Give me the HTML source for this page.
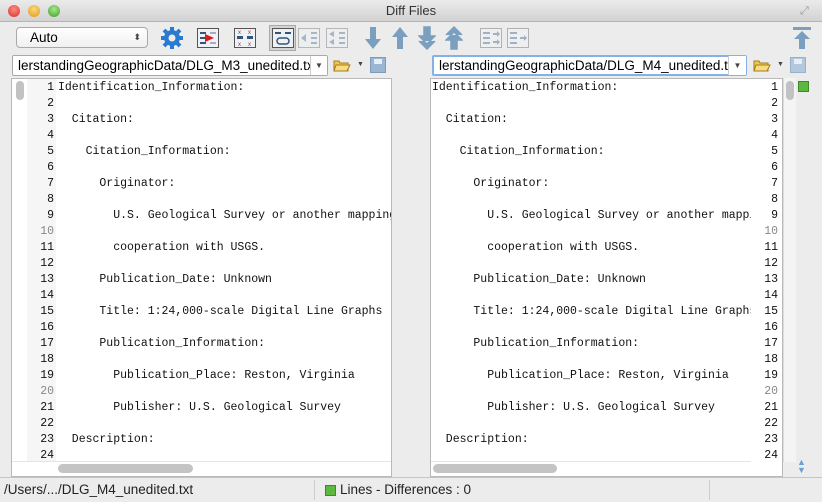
<!DOCTYPE html>
<html><head><meta charset="utf-8"><style>
*{margin:0;padding:0;box-sizing:border-box}
body{width:822px;height:502px;overflow:hidden;background:#ececec;font-family:"Liberation Sans",sans-serif;position:relative}
.abs{position:absolute}
.title{left:0;top:0;width:822px;height:22px;background:linear-gradient(#ebebeb,#d2d2d2);border-bottom:1px solid #b5b5b5;text-align:center;font-size:13px;line-height:22px;color:#333}
.dot{width:12px;height:12px;border-radius:6px;top:5px}
.combo{background:#fff;border:1px solid #a9a9a9;border-radius:3px;font-size:13.5px;line-height:19px}
.panel{background:#fff;border:1px solid #b9b9b9}
.code{font-family:"Liberation Mono",monospace;font-size:11.5px;line-height:16px;color:#111;white-space:pre}
.num{font-family:"Liberation Mono",monospace;font-size:11.5px;line-height:16px;color:#111;text-align:right;white-space:pre}
</style></head><body>
<div class="abs title">Diff Files</div>
<div class="abs dot" style="left:8px;background:radial-gradient(circle at 50% 35%,#ff8c80,#d8302a)"></div>
<div class="abs dot" style="left:28px;background:radial-gradient(circle at 50% 35%,#ffd77a,#dc9a16)"></div>
<div class="abs dot" style="left:48px;background:radial-gradient(circle at 50% 35%,#a6e88a,#3e9e2a)"></div>
<div class="abs" style="left:800px;top:5px;font-size:11px;color:#999">⤢</div>

<div class="abs combo" style="left:16px;top:27px;width:132px;height:21px;padding-left:13px;border-radius:4px;background:linear-gradient(#fff,#f0f0f0)">Auto<span class="abs" style="right:6px;top:0;font-size:9px;color:#444">⬍</span></div>

<svg class="abs" style="left:160px;top:26px" width="24" height="24" viewBox="0 0 24 24"><g fill="#2a7ad0"><circle cx="12" cy="12" r="8"/><g stroke="#2a7ad0" stroke-width="4"><line x1="12" y1="1" x2="12" y2="23"/><line x1="1" y1="12" x2="23" y2="12"/><line x1="4" y1="4" x2="20" y2="20"/><line x1="20" y1="4" x2="4" y2="20"/></g></g><circle cx="12" cy="12" r="3.5" fill="#ececec"/></svg>
<svg class="abs" style="left:197px;top:28px" width="22" height="20"><rect x="0.5" y="0.5" width="21" height="19" fill="#eef2f6" stroke="#555"/><rect x="3" y="4" width="6" height="2" fill="#357"/><rect x="3" y="9" width="6" height="2" fill="#357"/><rect x="3" y="14" width="6" height="2" fill="#357"/><rect x="13" y="4" width="6" height="2" fill="#aab"/><rect x="13" y="14" width="6" height="2" fill="#aab"/><path d="M8 6 L17 10 L8 14Z" fill="#e01818"/></svg>
<svg class="abs" style="left:234px;top:28px" width="22" height="20"><rect x="0.5" y="0.5" width="21" height="19" fill="#eef2f6" stroke="#555"/><rect x="3" y="8" width="6" height="3" fill="#357"/><rect x="13" y="8" width="6" height="3" fill="#357"/><text x="4" y="6" font-size="6" fill="#c22">x</text><text x="14" y="6" font-size="6" fill="#c22">x</text><text x="4" y="18" font-size="6" fill="#c22">x</text><text x="14" y="18" font-size="6" fill="#c22">x</text></svg>
<div class="abs" style="left:269px;top:25px;width:27px;height:26px;background:#d4d4d4;border:1px solid #aaa"></div>
<svg class="abs" style="left:272px;top:28px" width="22" height="20"><rect x="0.5" y="0.5" width="21" height="19" fill="#eef2f6" stroke="#555"/><rect x="3" y="4" width="6" height="2" fill="#357"/><rect x="13" y="4" width="6" height="2" fill="#357"/><rect x="5" y="10" width="12" height="6" rx="3" fill="none" stroke="#357" stroke-width="1.5"/></svg>
<svg class="abs" style="left:298px;top:28px" width="22" height="20" opacity=".45"><rect x="0.5" y="0.5" width="21" height="19" fill="#eef2f6" stroke="#777"/><rect x="13" y="4" width="6" height="2" fill="#579"/><rect x="13" y="9" width="6" height="2" fill="#579"/><rect x="13" y="14" width="6" height="2" fill="#579"/><path d="M3 10 L8 6 V14Z" fill="#579"/></svg>
<svg class="abs" style="left:326px;top:28px" width="22" height="20" opacity=".45"><rect x="0.5" y="0.5" width="21" height="19" fill="#eef2f6" stroke="#777"/><rect x="13" y="4" width="6" height="2" fill="#579"/><rect x="13" y="9" width="6" height="2" fill="#579"/><rect x="13" y="14" width="6" height="2" fill="#579"/><path d="M3 6 L8 3 V9Z M3 14 L8 11 V17Z" fill="#579"/></svg>
<svg class="abs" style="left:364px;top:26px" width="18" height="24"><path d="M6 1h6v12h5l-8 10-8-10h5z" fill="#7a9fbf"/></svg>
<svg class="abs" style="left:391px;top:26px" width="18" height="24"><path d="M6 23h6v-12h5l-8-10-8 10h5z" fill="#7a9fbf"/></svg>
<svg class="abs" style="left:418px;top:26px" width="18" height="24"><path d="M6 1h6v9h5l-8 8-8-8h5z M1 15l8 8 8-8" fill="#7a9fbf" stroke="#7a9fbf" stroke-width="1.5"/></svg>
<svg class="abs" style="left:445px;top:26px" width="18" height="24"><path d="M6 23h6v-9h5l-8-8-8 8h5z M1 9l8-8 8 8" fill="#7a9fbf" stroke="#7a9fbf" stroke-width="1.5"/></svg>
<svg class="abs" style="left:480px;top:28px" width="22" height="20" opacity=".5"><rect x="0.5" y="0.5" width="21" height="19" fill="#eef2f6" stroke="#777"/><rect x="3" y="4" width="7" height="2" fill="#579"/><rect x="3" y="9" width="7" height="2" fill="#579"/><rect x="3" y="14" width="7" height="2" fill="#579"/><path d="M13 5h4v-2l3 3-3 3v-2h-4z M13 13h4v-2l3 3-3 3v-2h-4z" fill="#579"/></svg>
<svg class="abs" style="left:507px;top:28px" width="22" height="20" opacity=".5"><rect x="0.5" y="0.5" width="21" height="19" fill="#eef2f6" stroke="#777"/><rect x="3" y="4" width="7" height="2" fill="#579"/><rect x="3" y="9" width="7" height="2" fill="#579"/><rect x="3" y="14" width="7" height="2" fill="#579"/><path d="M13 9h4v-2l3 3-3 3v-2h-4z" fill="#579"/></svg>
<svg class="abs" style="left:793px;top:26px" width="18" height="24"><rect x="0" y="1" width="18" height="3" fill="#7a9fbf"/><path d="M6 23h6v-10h5l-8-8-8 8h5z" fill="#7a9fbf"/></svg>

<div class="abs combo" style="left:12px;top:55px;width:316px;height:21px;padding-left:5px;border-radius:2px;overflow:hidden">lerstandingGeographicData/DLG_M3_unedited.txt</div>
<div class="abs" style="left:310px;top:56px;width:17px;height:19px;border-left:1px solid #ccc;background:#fff;font-size:8px;text-align:center;line-height:19px;color:#444">▼</div>
<svg class="abs" style="left:333px;top:58px" width="18" height="14"><path d="M1 3h5l1 2h8v8H1z" fill="#f0c850" stroke="#a67c1a"/><path d="M3 7h14l-3 6H1z" fill="#f7dc82" stroke="#a67c1a"/></svg>
<div class="abs" style="left:357px;top:61px;font-size:7px;color:#444">▼</div>
<div class="abs" style="left:370px;top:57px;width:16px;height:16px;background:#9ab6d3;border:1px solid #7d9cbd"><div style="margin:1px 3px;height:5px;background:#e6eef6"></div></div>

<div class="abs combo" style="left:432px;top:55px;width:315px;height:21px;padding-left:5px;border:2px solid #86b0e8;border-radius:2px;overflow:hidden;line-height:17px">lerstandingGeographicData/DLG_M4_unedited.txt|</div>
<div class="abs" style="left:728px;top:56px;width:18px;height:19px;border-left:1px solid #ccc;background:#fff;font-size:8px;text-align:center;line-height:19px;color:#444">▼</div>
<svg class="abs" style="left:753px;top:58px" width="18" height="14"><path d="M1 3h5l1 2h8v8H1z" fill="#f0c850" stroke="#a67c1a"/><path d="M3 7h14l-3 6H1z" fill="#f7dc82" stroke="#a67c1a"/></svg>
<div class="abs" style="left:777px;top:61px;font-size:7px;color:#444">▼</div>
<div class="abs" style="left:790px;top:57px;width:16px;height:16px;background:#b4c8dc;border:1px solid #9ab0c8"><div style="margin:1px 3px;height:5px;background:#e6eef6"></div></div>

<!-- left panel -->
<div class="abs panel" style="left:11px;top:78px;width:381px;height:399px"></div>
<div class="abs" style="left:27px;top:79px;width:29px;height:382px;background:#f6f6f6"></div>
<div class="abs" style="left:16px;top:81px;width:8px;height:19px;border-radius:4px;background:#c2c2c2"></div>
<div class="abs num" style="left:27px;top:80px;width:27px">1
2
3
4
5
6
7
8
9
<span style="color:#888">10</span>
11
12
13
14
15
16
17
18
19
<span style="color:#888">20</span>
21
22
23
24</div>
<div class="abs code" style="left:58px;top:80px;width:333px;overflow:hidden;height:382px">Identification_Information:

  Citation:

    Citation_Information:

      Originator:

        U.S. Geological Survey or another mapping

        cooperation with USGS.

      Publication_Date: Unknown

      Title: 1:24,000-scale Digital Line Graphs

      Publication_Information:

        Publication_Place: Reston, Virginia

        Publisher: U.S. Geological Survey

  Description:
</div>
<div class="abs" style="left:12px;top:461px;width:379px;height:15px;background:#fff;border-top:1px solid #e4e4e4"></div>
<div class="abs" style="left:58px;top:464px;width:135px;height:9px;border-radius:5px;background:#c4c4c4"></div>

<!-- right panel -->
<div class="abs panel" style="left:430px;top:78px;width:353px;height:399px"></div>
<div class="abs code" style="left:432px;top:80px;width:319px;overflow:hidden;height:382px">Identification_Information:

  Citation:

    Citation_Information:

      Originator:

        U.S. Geological Survey or another mapping

        cooperation with USGS.

      Publication_Date: Unknown

      Title: 1:24,000-scale Digital Line Graphs

      Publication_Information:

        Publication_Place: Reston, Virginia

        Publisher: U.S. Geological Survey

  Description:
</div>
<div class="abs num" style="left:752px;top:80px;width:26px">1
2
3
4
5
6
7
8
9
<span style="color:#888">10</span>
11
12
13
14
15
16
17
18
19
<span style="color:#888">20</span>
21
22
23
24</div>
<div class="abs" style="left:783px;top:78px;width:13px;height:384px;background:#f4f4f4;border-left:1px solid #ddd"></div>
<div class="abs" style="left:786px;top:81px;width:8px;height:19px;border-radius:4px;background:#c2c2c2"></div>
<div class="abs" style="left:431px;top:461px;width:320px;height:15px;background:#fff;border-top:1px solid #e4e4e4"></div>
<div class="abs" style="left:433px;top:464px;width:124px;height:9px;border-radius:5px;background:#c4c4c4"></div>
<div class="abs" style="left:798px;top:81px;width:11px;height:11px;background:#5cb83e;border:1px solid #3d8a28"></div>
<div class="abs" style="left:797px;top:458px;font-size:9px;line-height:8px;color:#6aa0d8">▲<br>▼</div>

<!-- status -->
<div class="abs" style="left:0;top:477px;width:822px;height:25px;background:#ececec;border-top:1px solid #c4c4c4"></div>
<div class="abs" style="left:4px;top:482px;font-size:13.5px;color:#222">/Users/.../DLG_M4_unedited.txt</div>
<div class="abs" style="left:314px;top:480px;width:1px;height:20px;background:#ccc"></div>
<div class="abs" style="left:325px;top:485px;width:11px;height:11px;background:#5cb83e;border:1px solid #3d8a28"></div>
<div class="abs" style="left:340px;top:482px;font-size:13.5px;color:#222">Lines - Differences : 0</div>
<div class="abs" style="left:709px;top:480px;width:1px;height:20px;background:#ccc"></div>
</body></html>
